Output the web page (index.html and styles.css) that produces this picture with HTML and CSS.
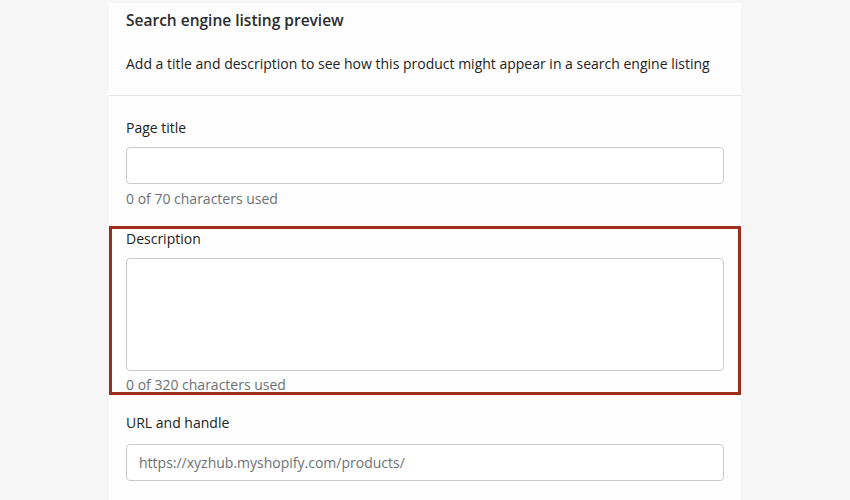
FILE: index.html
```html
<!DOCTYPE html>
<html lang="en">
<head>
<meta charset="utf-8">
<title>Search engine listing preview</title>
<link rel="stylesheet" href="styles.css">
</head>
<body>
<div class="card">
  <div class="card-header">
    <h2 class="card-title">Search engine listing preview</h2>
    <p class="card-sub">Add a title and description to see how this product might appear in a search engine listing</p>
  </div>
  <div class="card-body">
    <div class="field">
      <label class="label">Page title</label>
      <div class="input"></div>
      <div class="help">0 of 70 characters used</div>
    </div>
    <div class="field highlight">
      <label class="label">Description</label>
      <div class="input textarea"></div>
      <div class="help">0 of 320 characters used</div>
    </div>
    <div class="field">
      <label class="label">URL and handle</label>
      <div class="input url">https://xyzhub.myshopify.com/products/</div>
    </div>
  </div>
</div>
</body>
</html>
```
FILE: styles.css
```css
html, body {
  margin: 0;
  padding: 0;
  background: #f6f6f7;
}
body {
  font-family: "Open Sans", "Noto Sans", sans-serif;
  color: #202223;
  font-size: 14px;
}
.card {
  margin: 3px 0 0 109px;
  width: 632px;
  background: #fefefe;
  min-height: 497px;
}
.card-header {
  padding: 7px 17px 21px 17px;
  border-bottom: 1px solid #e3e4e6;
}
.card-title {
  margin: 0;
  font-size: 15.5px;
  font-weight: 600;
  line-height: 20px;
  color: #2a2c2e;
}
.card-sub {
  margin: 24px 0 0 0;
  line-height: 20px;
}
.card-body {
  padding: 22px 17px 0 17px;
}
.field {
  display: flex;
  flex-direction: column;
}
.label {
  line-height: 20px;
  margin-bottom: 9px;
}
.input {
  flex-shrink: 0;
  height: 35px;
  border: 1px solid #c9cccf;
  border-radius: 4px;
  background: #fff;
}
.help {
  color: #6d7175;
  line-height: 20px;
  margin-top: 5px;
}
.highlight {
  margin: 17px -17px 0 -17px;
  padding: 0 14px;
  border: 3px solid #a02d1c;
  height: 169px;
  box-sizing: border-box;
}
.highlight .label {
  line-height: 19px;
  margin-bottom: 10px;
}
.textarea {
  height: 111px;
}
.highlight .help {
  margin-top: 7px;
  line-height: 14px;
}
.field.highlight + .field {
  margin-top: 18px;
}
.url {
  height: 35px;
  line-height: 35px;
  padding-left: 12px;
  color: #6d7175;
}
.field.highlight + .field .label {
  margin-bottom: 11px;
}
```
